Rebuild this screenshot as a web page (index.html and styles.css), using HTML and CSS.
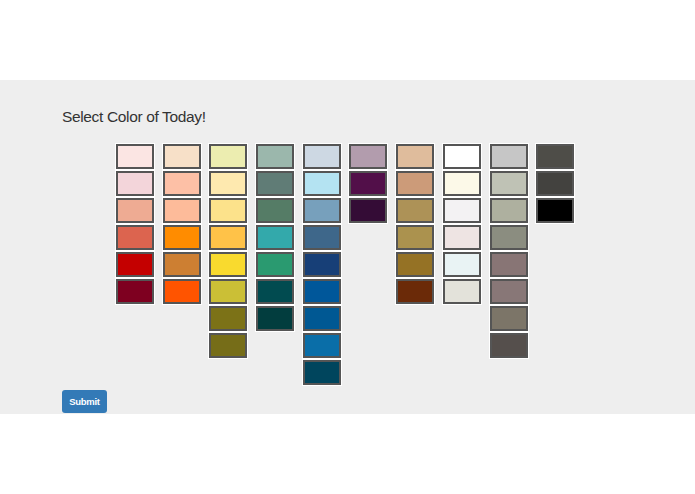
FILE: index.html
```html
<!DOCTYPE html>
<html>

<head>
    <title>Color of Today</title>
    <meta charset="UTF-8">
    <meta name="viewport" content="width=device-width, initial-scale=1.0">
    <link rel="stylesheet" href="styles.css">
</head>

<body>
    <div class="header"></div>
    <div class="jumbotron">
        <h2>Select Color of Today!</h2>
        <div class="palette">
            <div class="column">
                <div class="swatch" style="background:#fbe5e3"></div>
                <div class="swatch" style="background:#f3d5da"></div>
                <div class="swatch" style="background:#eeab93"></div>
                <div class="swatch" style="background:#dc644f"></div>
                <div class="swatch" style="background:#c40000"></div>
                <div class="swatch" style="background:#7e0020"></div>
            </div>
            <div class="column">
                <div class="swatch" style="background:#f7e0c8"></div>
                <div class="swatch" style="background:#fdc0a6"></div>
                <div class="swatch" style="background:#fdbb9a"></div>
                <div class="swatch" style="background:#ff8c00"></div>
                <div class="swatch" style="background:#cd7f32"></div>
                <div class="swatch" style="background:#ff5400"></div>
            </div>
            <div class="column">
                <div class="swatch" style="background:#ecedb0"></div>
                <div class="swatch" style="background:#fee9af"></div>
                <div class="swatch" style="background:#fce28b"></div>
                <div class="swatch" style="background:#ffc248"></div>
                <div class="swatch" style="background:#f9da2e"></div>
                <div class="swatch" style="background:#cbbf36"></div>
                <div class="swatch" style="background:#7c7217"></div>
                <div class="swatch" style="background:#766d18"></div>
            </div>
            <div class="column">
                <div class="swatch" style="background:#9bb7ac"></div>
                <div class="swatch" style="background:#607c76"></div>
                <div class="swatch" style="background:#557c66"></div>
                <div class="swatch" style="background:#33a9ab"></div>
                <div class="swatch" style="background:#2a9a70"></div>
                <div class="swatch" style="background:#014b50"></div>
                <div class="swatch" style="background:#023d3e"></div>
            </div>
            <div class="column">
                <div class="swatch" style="background:#cdd8e3"></div>
                <div class="swatch" style="background:#b4e3f2"></div>
                <div class="swatch" style="background:#77a0bc"></div>
                <div class="swatch" style="background:#3e678a"></div>
                <div class="swatch" style="background:#173f77"></div>
                <div class="swatch" style="background:#00579a"></div>
                <div class="swatch" style="background:#005893"></div>
                <div class="swatch" style="background:#0a6ea8"></div>
                <div class="swatch" style="background:#00455d"></div>
            </div>
            <div class="column">
                <div class="swatch" style="background:#b29cad"></div>
                <div class="swatch" style="background:#520f49"></div>
                <div class="swatch" style="background:#340c36"></div>
            </div>
            <div class="column">
                <div class="swatch" style="background:#dfbc9c"></div>
                <div class="swatch" style="background:#cc9b79"></div>
                <div class="swatch" style="background:#ad9257"></div>
                <div class="swatch" style="background:#ab924e"></div>
                <div class="swatch" style="background:#957225"></div>
                <div class="swatch" style="background:#6b2a08"></div>
            </div>
            <div class="column">
                <div class="swatch" style="background:#ffffff"></div>
                <div class="swatch" style="background:#fcf9e8"></div>
                <div class="swatch" style="background:#f3f2f3"></div>
                <div class="swatch" style="background:#eee4e3"></div>
                <div class="swatch" style="background:#e9f3f4"></div>
                <div class="swatch" style="background:#e3e2da"></div>
            </div>
            <div class="column">
                <div class="swatch" style="background:#c6c6c6"></div>
                <div class="swatch" style="background:#bfc2b5"></div>
                <div class="swatch" style="background:#aeb09f"></div>
                <div class="swatch" style="background:#8b8d80"></div>
                <div class="swatch" style="background:#887575"></div>
                <div class="swatch" style="background:#887777"></div>
                <div class="swatch" style="background:#7c7568"></div>
                <div class="swatch" style="background:#554f4c"></div>
            </div>
            <div class="column">
                <div class="swatch" style="background:#4e4d48"></div>
                <div class="swatch" style="background:#43423f"></div>
                <div class="swatch" style="background:#000000"></div>
            </div>
        </div>
        <button class="btn-submit" type="submit">Submit</button>
    </div>
</body>

</html>
```

FILE: styles.css
```css
body {
    margin: 0;
    font-family: "Liberation Sans", Arial, sans-serif;
    background-color: #ffffff;
}

.header {
    height: 80px;
}

.jumbotron {
    height: 334px;
    box-sizing: border-box;
    padding: 27px 62px 0;
    background-color: #eeeeee;
}

.jumbotron h2 {
    margin: 0 0 17px;
    font-size: 15.5px;
    font-weight: normal;
    line-height: 20px;
    letter-spacing: -0.35px;
    color: #333333;
}

.palette {
    display: flex;
    align-items: flex-start;
    gap: 8.7px;
    margin-left: 54px;
}

.column {
    display: flex;
    flex-direction: column;
    gap: 2px;
}

.swatch {
    width: 38px;
    height: 25px;
    box-sizing: border-box;
    border: 2px solid #555555;
    box-shadow: 0 0 0 1px #ffffff;
}

.btn-submit {
    display: block;
    width: 45px;
    height: 23px;
    margin-top: 5px;
    padding: 0;
    border: none;
    border-radius: 3px;
    background-color: #337ab7;
    color: #ffffff;
    font-family: "Liberation Sans", Arial, sans-serif;
    font-size: 9.5px;
    font-weight: bold;
    letter-spacing: -0.3px;
    cursor: pointer;
}
```
